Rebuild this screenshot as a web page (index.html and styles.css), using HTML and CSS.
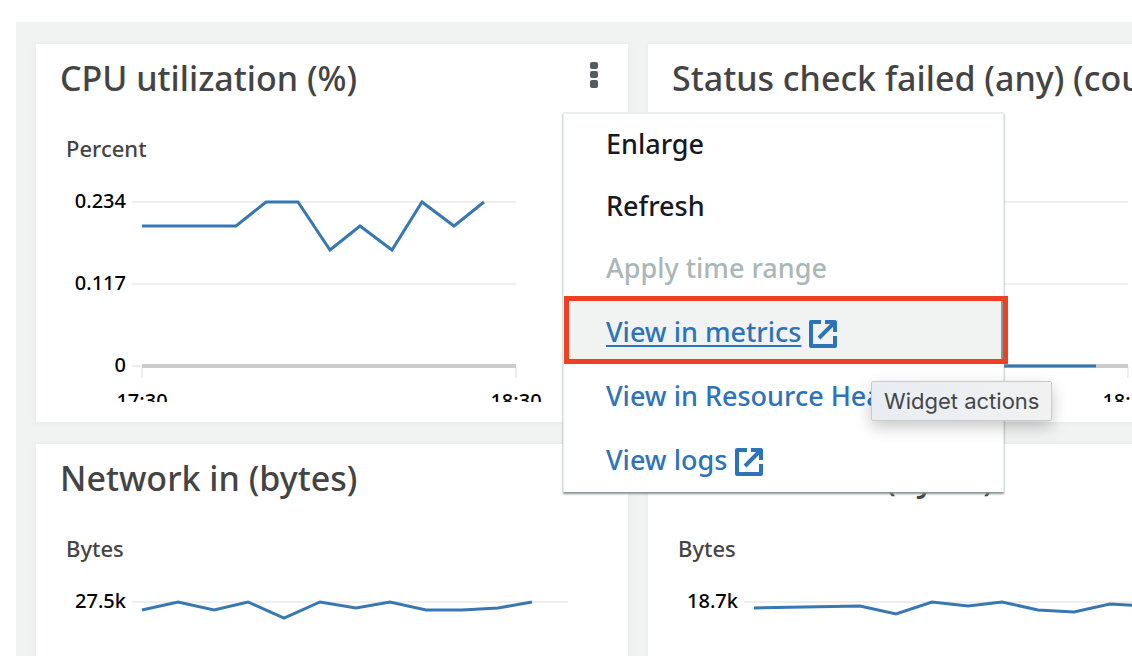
FILE: index.html
```html
<!DOCTYPE html>
<html lang="en">
<head>
<meta charset="utf-8">
<title>Instance monitoring</title>
<link rel="stylesheet" href="styles.css">
</head>
<body>
<svg class="sprite" aria-hidden="true">
  <symbol id="external" viewBox="0 0 28 28">
    <path d="M12 2H2V26H26V16M16 2H26V12M25 3L10 18" fill="none" stroke="currentColor" stroke-width="4" stroke-linejoin="round"/>
  </symbol>
</svg>
<main class="dashboard">
  <section class="card">
    <header class="card-header">
      <h2 class="card-title">CPU utilization (%)</h2>
      <div class="actions">
        <button class="actions-toggle" type="button" aria-label="Widget actions" aria-expanded="true">
          <svg class="dots" viewBox="0 0 8 26" aria-hidden="true">
            <rect x="0" y="0" width="8" height="7" rx="2"/>
            <rect x="0" y="9" width="8" height="7" rx="2"/>
            <rect x="0" y="18" width="8" height="8" rx="2"/>
          </svg>
        </button>
        <div class="menu">
          <button class="menu-item" type="button">Enlarge</button>
          <button class="menu-item" type="button">Refresh</button>
          <button class="menu-item" type="button" disabled>Apply time range</button>
          <a class="menu-item menu-link active" href="#metrics"><span class="link-text">View in metrics</span><svg class="external"><use href="#external"/></svg></a>
          <a class="menu-item menu-link" href="#health"><span class="link-text">View in Resource Health</span></a>
          <a class="menu-item menu-link" href="#logs"><span class="link-text">View logs</span><svg class="external"><use href="#external"/></svg></a>
          <div class="tooltip" role="tooltip">Widget actions</div>
        </div>
      </div>
    </header>
    <p class="unit">Percent</p>
    <svg class="chart" role="img" aria-label="CPU utilization">
      <path class="grid" d="M96 22H480M96 104H480M96 186H106M106 186V198M480 186V198"/>
      <path class="axis" d="M106 186H480"/>
      <polyline class="series" points="106,46 200,46 230,22 262,22 294,70 324,46 356,70 386,22 418,46 448,22"/>
      <text class="value" x="90" y="28">0.234</text>
      <text class="value" x="90" y="110">0.117</text>
      <text class="value" x="90" y="192">0</text>
      <text class="time" x="106" y="228">17:30</text>
      <text class="time" x="480" y="228">18:30</text>
    </svg>
  </section>

  <section class="card">
    <header class="card-header">
      <h2 class="card-title">Status check failed (any) (count)</h2>
    </header>
    <p class="unit"></p>
    <svg class="chart" role="img" aria-label="Status check failed">
      <path class="grid" d="M96 22H480M96 104H480M480 186V198"/>
      <path class="axis" d="M106 186H480"/>
      <path class="series" d="M106 186H448"/>
      <text class="time" x="480" y="228">18:30</text>
    </svg>
  </section>

  <section class="card">
    <header class="card-header">
      <h2 class="card-title">Network in (bytes)</h2>
    </header>
    <p class="unit">Bytes</p>
    <svg class="chart" role="img" aria-label="Network in">
      <path class="grid" d="M96 22H532"/>
      <polyline class="series" points="106,30 142,22 178,30 212,22 248,38 284,22 320,28 354,22 390,30 426,30 462,28 496,22"/>
      <text class="value" x="90" y="28">27.5k</text>
    </svg>
  </section>

  <section class="card">
    <header class="card-header">
      <h2 class="card-title">Network out (bytes)</h2>
    </header>
    <p class="unit">Bytes</p>
    <svg class="chart" role="img" aria-label="Network out">
      <path class="grid" d="M96 22H532"/>
      <polyline class="series" points="106,28 212,26 248,34 284,22 320,26 354,22 390,30 426,32 462,24 496,26"/>
      <text class="value" x="90" y="28">18.7k</text>
    </svg>
  </section>
</main>
</body>
</html>
```

FILE: styles.css
```css
* {
  box-sizing: border-box;
}

body {
  margin: 0;
  height: 100vh;
  overflow: hidden;
  background: #fff;
  font-family: "Noto Sans", "Open Sans", sans-serif;
  color: #444;
}

.sprite {
  display: none;
}

.dashboard {
  display: grid;
  grid-template-columns: repeat(2, minmax(592px, 1fr));
  gap: 22px 20px;
  margin: 22px 0 0 16px;
  padding: 22px 20px;
  background: #f1f3f3;
}

.card {
  background: #fff;
  box-shadow: 0 0 3px 2px #ececec;
  padding-bottom: 20px;
}

.card-header {
  display: flex;
  align-items: center;
  justify-content: space-between;
  height: 68px;
  padding: 0 24px;
}

.card-title {
  margin: 0;
  font-size: 34px;
  line-height: 48px;
  font-weight: 500;
  white-space: nowrap;
}

.unit {
  margin: 0;
  min-height: 68px;
  padding: 20px 30px 16px;
  font-size: 22px;
  line-height: 32px;
  font-weight: 500;
}

.chart {
  display: block;
  width: 100%;
  height: 222px;
  overflow: hidden;
}

.grid,
.axis,
.series {
  fill: none;
}

.grid {
  stroke: #eee;
  stroke-width: 2;
}

.axis {
  stroke: #ccc;
  stroke-width: 4;
}

.series {
  stroke: #3778b3;
  stroke-width: 3;
}

.value,
.time {
  fill: #000;
  font-size: 20px;
  font-weight: 500;
}

.value {
  text-anchor: end;
}

.time {
  text-anchor: middle;
}

.actions {
  position: relative;
}

.actions-toggle {
  display: flex;
  align-items: center;
  justify-content: center;
  width: 20px;
  height: 38px;
  margin-bottom: 6px;
  padding: 0;
  border: 0;
  background: none;
}

.dots {
  width: 8px;
  height: 26px;
  fill: #545b64;
}

.menu {
  position: absolute;
  z-index: 2;
  top: 58px;
  left: -20px;
  width: 439px;
  background: #fff;
  box-shadow: 0 -1px 0 1px #eaeded, 0 1px 2px 1px #879596;
}

.menu-item {
  display: flex;
  align-items: center;
  gap: 8px;
  width: 100%;
  height: 62px;
  padding: 0 42px 2px;
  border: 0;
  background: none;
  color: #16191f;
  font: 500 27px/38px "Noto Sans", "Open Sans", sans-serif;
  text-align: left;
  text-decoration: none;
  white-space: nowrap;
}

.menu-item:disabled {
  color: #aab7b8;
}

.menu-link {
  height: 64px;
  padding-bottom: 0;
  color: #2e73b8;
}

.active {
  position: relative;
  background: #f1f3f3;
  border-right: 2px solid #879596;
}

.active .link-text {
  text-decoration: underline;
  text-decoration-thickness: 2px;
  text-underline-offset: 3px;
}

.active::after {
  content: "";
  position: absolute;
  top: -4px;
  left: 0;
  right: -7px;
  bottom: 0;
  border: 5px solid #ee4023;
}

.external {
  width: 28px;
  height: 28px;
  margin-top: 4px;
}

.tooltip {
  position: absolute;
  top: 267px;
  left: 307px;
  padding: 0 12px;
  border: 1px solid #c8cacd;
  border-radius: 2px;
  background: linear-gradient(90deg, #e8edf2, #f1f1f1);
  box-shadow: 0 6px 16px rgba(0, 0, 0, 0.22);
  color: #444648;
  font: 400 22px/38px Inter, Roboto, sans-serif;
  white-space: nowrap;
}
```
